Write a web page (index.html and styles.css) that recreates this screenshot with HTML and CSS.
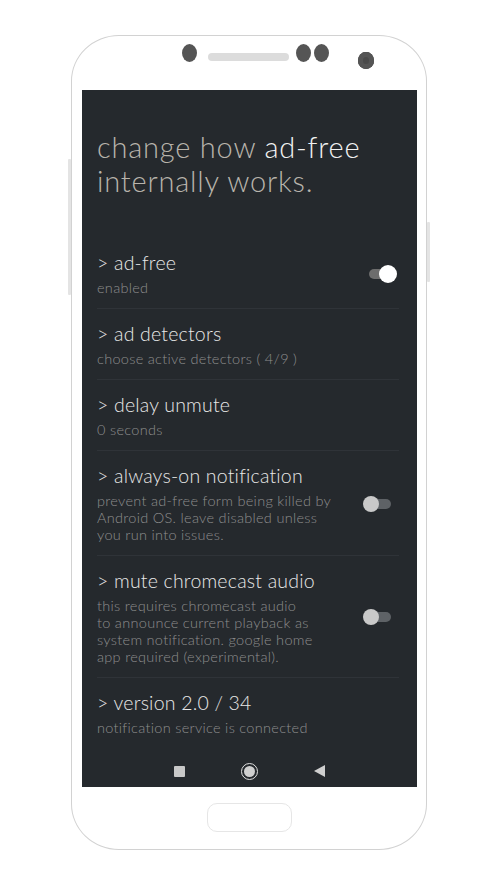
FILE: index.html
```html
<!DOCTYPE html>
<html lang="en">
<head>
<meta charset="utf-8">
<title>ad-free settings</title>
<link rel="stylesheet" href="styles.css">
</head>
<body>
<div class="stage">
  <div class="phone">
    <span class="side-btn side-left"></span>
    <span class="side-btn side-right"></span>
    <div class="bezel-top">
      <span class="sensor s1"></span>
      <span class="speaker"></span>
      <span class="sensor s2"></span>
      <span class="sensor s3"></span>
      <span class="camera"></span>
    </div>
    <div class="screen">
      <h1 class="intro">change how <span class="hl">ad-free</span><br>internally works.</h1>
      <ul class="settings">
        <li class="setting">
          <div class="setting-text">
            <div class="setting-title">&gt; ad-free</div>
            <div class="setting-sub">enabled</div>
          </div>
          <span class="switch on"><span class="track"></span><span class="knob"></span></span>
        </li>
        <li class="setting">
          <div class="setting-text">
            <div class="setting-title">&gt; ad detectors</div>
            <div class="setting-sub">choose active detectors ( 4/9 )</div>
          </div>
        </li>
        <li class="setting">
          <div class="setting-text">
            <div class="setting-title">&gt; delay unmute</div>
            <div class="setting-sub">0 seconds</div>
          </div>
        </li>
        <li class="setting">
          <div class="setting-text">
            <div class="setting-title">&gt; always-on notification</div>
            <div class="setting-sub">prevent ad-free form being killed by<br>Android OS. leave disabled unless<br>you run into issues.</div>
          </div>
          <span class="switch"><span class="track"></span><span class="knob"></span></span>
        </li>
        <li class="setting">
          <div class="setting-text">
            <div class="setting-title">&gt; mute chromecast audio</div>
            <div class="setting-sub">this requires chromecast audio<br>to announce current playback as<br>system notification. google home<br>app required (experimental).</div>
          </div>
          <span class="switch"><span class="track"></span><span class="knob"></span></span>
        </li>
        <li class="setting">
          <div class="setting-text">
            <div class="setting-title">&gt; version 2.0 / 34</div>
            <div class="setting-sub">notification service is connected</div>
          </div>
        </li>
      </ul>
      <nav class="navbar">
        <span class="nav-square"></span>
        <span class="nav-home"><span class="nav-home-dot"></span></span>
        <svg class="nav-back" width="11" height="12" viewBox="0 0 11 12"><polygon points="11,0 11,12 0,6" fill="#cfcfcf"/></svg>
      </nav>
    </div>
    <div class="bezel-bottom">
      <span class="home-btn"></span>
    </div>
  </div>
</div>
</body>
</html>
```
FILE: styles.css
```css
* { box-sizing: border-box; }
html, body { margin: 0; padding: 0; background: #ffffff; }
body { font-family: "Lato", "Open Sans", "Liberation Sans", sans-serif; }

.stage {
  width: 500px;
  height: 889px;
  padding: 35px 0 0 71px;
}

.phone {
  position: relative;
  width: 356px;
  height: 815px;
  border: 1px solid #d2d2d2;
  border-radius: 48px / 46px;
  display: flex;
  flex-direction: column;
  background: #fff;
}

.side-btn {
  position: absolute;
  width: 3px;
  background: #e4e4e4;
  border-radius: 1px;
}
.side-left { left: -4px; top: 123px; height: 136px; }
.side-right { right: -4px; top: 186px; height: 60px; }

.bezel-top {
  height: 54px;
  display: flex;
  align-items: flex-start;
  padding-left: 110px;
  flex: none;
}
.sensor {
  width: 15px;
  height: 18px;
  border-radius: 50%;
  background: #555555;
  margin-top: 8px;
  flex: none;
}
.speaker {
  width: 81px;
  height: 8px;
  border-radius: 4px;
  background: #dcdcdc;
  margin: 17px 7px 0 11px;
  flex: none;
}
.s3 { margin-left: 3px; }
.camera {
  width: 16px;
  height: 17px;
  border-radius: 50%;
  background: #555555;
  margin: 16px 0 0 29px;
  flex: none;
  box-shadow: inset 0 0 0 5px #555555, inset 0 0 0 8px #4a4a4a;
}

.screen {
  height: 697px;
  margin: 0 9px 0 10px;
  background: #25292d;
  padding: 40px 18px 0 15px;
  display: flex;
  flex-direction: column;
  flex: none;
}

.intro {
  margin: 0 0 40px;
  font-weight: 300;
  font-size: 29px;
  line-height: 34px;
  color: #b8b4ac;
  letter-spacing: 0.8px;
}
.hl { color: #f2f2f2; }

.settings {
  list-style: none;
  margin: 0;
  padding: 0;
}
.setting {
  display: flex;
  align-items: center;
  justify-content: space-between;
  padding: 13px 0 12px;
  border-bottom: 1px solid #2f3338;
}
.setting:last-child { border-bottom: none; }
.setting-text { flex: 1; }
.setting-title {
  font-weight: 300;
  font-size: 19.5px;
  line-height: 24px;
  color: #e8e8e8;
  letter-spacing: 0.2px;
}
.setting-sub {
  margin-top: 4px;
  font-weight: 300;
  font-size: 14.5px;
  line-height: 17px;
  color: #8e8e8e;
  letter-spacing: 0.3px;
}

.switch {
  position: relative;
  width: 34px;
  height: 18px;
  flex: none;
  margin-right: 2px;
}
.switch .track {
  position: absolute;
  left: 6px;
  right: 6px;
  top: 4px;
  height: 10px;
  border-radius: 5px;
  background: #5e6266;
}
.switch .knob {
  position: absolute;
  top: 1px;
  left: 0;
  width: 16px;
  height: 16px;
  border-radius: 50%;
  background: #c9c9c9;
}
.switch.on .track { background: #6d6d6d; }
.switch.on .knob {
  left: auto;
  right: 0;
  top: 0;
  width: 18px;
  height: 18px;
  background: #ffffff;
}

.navbar {
  margin-top: auto;
  height: 32px;
  display: flex;
  align-items: center;
  justify-content: center;
  gap: 56px;
  margin-left: -15px;
  margin-right: -18px;
}
.nav-square {
  width: 11px;
  height: 11px;
  background: #c8c8c8;
  border-radius: 1px;
}
.nav-home {
  width: 17px;
  height: 17px;
  border-radius: 50%;
  border: 1.5px solid #e0e0e0;
  display: flex;
  align-items: center;
  justify-content: center;
}
.nav-home-dot {
  width: 11px;
  height: 11px;
  border-radius: 50%;
  background: #cfcfcf;
}

.bezel-bottom {
  flex: 1;
  display: flex;
  justify-content: center;
  padding-top: 16px;
}
.home-btn {
  width: 85px;
  height: 29px;
  border: 1.5px solid #e6e6e6;
  border-radius: 10px;
}
```
